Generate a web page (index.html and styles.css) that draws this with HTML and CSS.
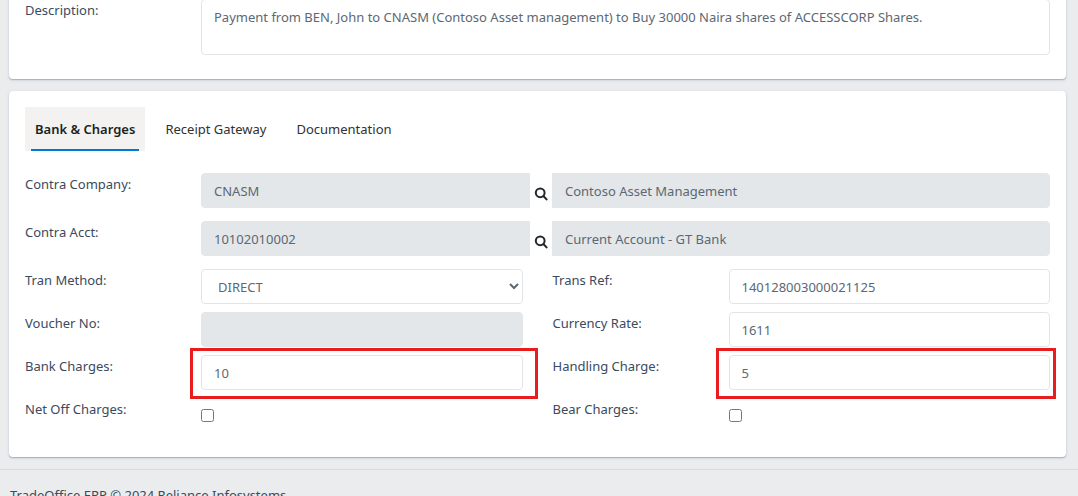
FILE: index.html
```html
<!DOCTYPE html>
<html lang="en">
<head>
<meta charset="utf-8">
<title>TradeOffice ERP</title>
<link rel="stylesheet" href="styles.css">
</head>
<body>
<main class="content">
  <section class="card card-summary">
    <div class="field">
      <label class="label" for="description">Description:</label>
      <textarea class="control description" id="description">Payment from BEN, John to CNASM (Contoso Asset management) to Buy 30000 Naira shares of ACCESSCORP Shares.</textarea>
    </div>
  </section>

  <section class="card card-details">
    <div class="tabs" role="tablist">
      <button class="tab tab-active" type="button" role="tab" aria-selected="true">Bank &amp; Charges</button>
      <button class="tab" type="button" role="tab" aria-selected="false">Receipt Gateway</button>
      <button class="tab" type="button" role="tab" aria-selected="false">Documentation</button>
    </div>

    <form class="form">
      <div class="lookup">
        <label class="label" for="company">Contra Company:</label>
        <input class="control lookup-code" id="company" value="CNASM" readonly>
        <button class="search" type="button" aria-label="Search company">
          <svg class="search-icon" viewBox="0 0 14 14"><circle cx="6.2" cy="5.8" r="4.4"/><path d="M9.6 9.2 12.6 12.4"/></svg>
        </button>
        <input class="control lookup-name" aria-label="Company name" value="Contoso Asset Management" readonly>
      </div>
      <div class="lookup">
        <label class="label" for="account">Contra Acct:</label>
        <input class="control lookup-code" id="account" value="10102010002" readonly>
        <button class="search" type="button" aria-label="Search account">
          <svg class="search-icon" viewBox="0 0 14 14"><circle cx="6.2" cy="5.8" r="4.4"/><path d="M9.6 9.2 12.6 12.4"/></svg>
        </button>
        <input class="control lookup-name" aria-label="Account name" value="Current Account - GT Bank" readonly>
      </div>

      <div class="grid">
        <div class="field">
          <label class="label" for="method">Tran Method:</label>
          <select class="control" id="method"><option>DIRECT</option></select>
        </div>
        <div class="field">
          <label class="label" for="ref">Trans Ref:</label>
          <input class="control" id="ref" value="140128003000021125">
        </div>
        <div class="field">
          <label class="label" for="voucher">Voucher No:</label>
          <input class="control" id="voucher" readonly>
        </div>
        <div class="field">
          <label class="label" for="rate">Currency Rate:</label>
          <input class="control" id="rate" value="1611">
        </div>
        <div class="field">
          <label class="label" for="bank-charges">Bank Charges:</label>
          <div class="marked marked-bank"><input class="control" id="bank-charges" value="10"></div>
        </div>
        <div class="field">
          <label class="label" for="handling">Handling Charge:</label>
          <div class="marked marked-handling"><input class="control" id="handling" value="5"></div>
        </div>
        <div class="field">
          <label class="label" for="net-off">Net Off Charges:</label>
          <input class="check" id="net-off" type="checkbox">
        </div>
        <div class="field">
          <label class="label" for="bear">Bear Charges:</label>
          <input class="check" id="bear" type="checkbox">
        </div>
      </div>
    </form>
  </section>
</main>
<footer class="footer">TradeOffice ERP © 2024 Reliance Infosystems</footer>
</body>
</html>
```
FILE: styles.css
```css
* {
  box-sizing: border-box;
}

body {
  margin: 0;
  height: 100vh;
  overflow: hidden;
  background: #ebecee;
  color: #3b4a5e;
  font: 13px/22px "Noto Sans", "Open Sans", sans-serif;
}

.content {
  display: flex;
  flex-direction: column;
  gap: 12px;
  padding: 0 12px 12px 9px;
}

.card {
  padding: 16px;
  background: #fff;
  border-radius: 4px;
  box-shadow: 0 1px 1px #a9b2bf, 0 1px 3px #c5cad1;
}

.card-summary {
  margin-top: -1px;
  padding: 0 16px 24px;
  border-radius: 0 0 4px 4px;
}

.card-details {
  padding-bottom: 24px;
}

.field {
  display: flex;
  align-items: flex-start;
}

.label {
  flex: 0 0 176px;
}

.control {
  flex: 1;
  width: 100%;
  min-width: 0;
  height: 35px;
  padding: 0 12px;
  border: 1px solid #e2e5e8;
  border-radius: 4px;
  background: #fff;
  color: #5c6873;
  font: inherit;
}

.control:read-only:not(select) {
  background: #e3e7ea;
  border-color: #e3e7ea;
}

.description {
  display: block;
  height: 56px;
  padding: 6px 12px;
  resize: none;
}

.tabs {
  display: flex;
  gap: 10px;
  margin-bottom: 22px;
}

.tab {
  position: relative;
  height: 44px;
  padding: 0 10px;
  border: 0;
  background: none;
  color: #323130;
  font: inherit;
}

.tab-active {
  background: #f3f2f1;
  color: #201f1e;
  font-weight: 600;
}

.tab-active::after {
  content: "";
  position: absolute;
  right: 6px;
  bottom: 0;
  left: 6px;
  height: 2px;
  background: #0078d4;
}

.lookup {
  display: grid;
  grid-template-columns: 176px 329fr 22px 498fr;
  align-items: start;
  margin-bottom: 13px;
}

.lookup .lookup-code {
  border-radius: 4px 0 0 4px;
}

.lookup .lookup-name {
  border-radius: 0 4px 4px 0;
}

.search {
  display: flex;
  align-items: center;
  justify-content: center;
  height: 41px;
  margin-bottom: -6px;
  padding: 0;
  border: 0;
  background: none;
}

.search-icon {
  width: 14px;
  height: 14px;
  fill: none;
  stroke: #23282c;
  stroke-width: 2;
  stroke-linecap: round;
}

.grid {
  display: grid;
  grid-template-columns: 1fr 1fr;
  gap: 8px 30px;
}

.marked {
  position: relative;
  flex: 1;
  display: flex;
}

.marked::after {
  content: "";
  position: absolute;
  border: 3px solid #e81e1e;
  pointer-events: none;
}

.marked-bank::after {
  inset: -7px -15px -9px -11px;
}

.marked-handling::after {
  inset: -7px -6px -9px -13px;
}

.check {
  width: 13px;
  height: 13px;
  margin: 11px 0;
}

.footer {
  padding: 14px 10px;
  border-top: 1px solid #d8dbe0;
  white-space: nowrap;
}
```
